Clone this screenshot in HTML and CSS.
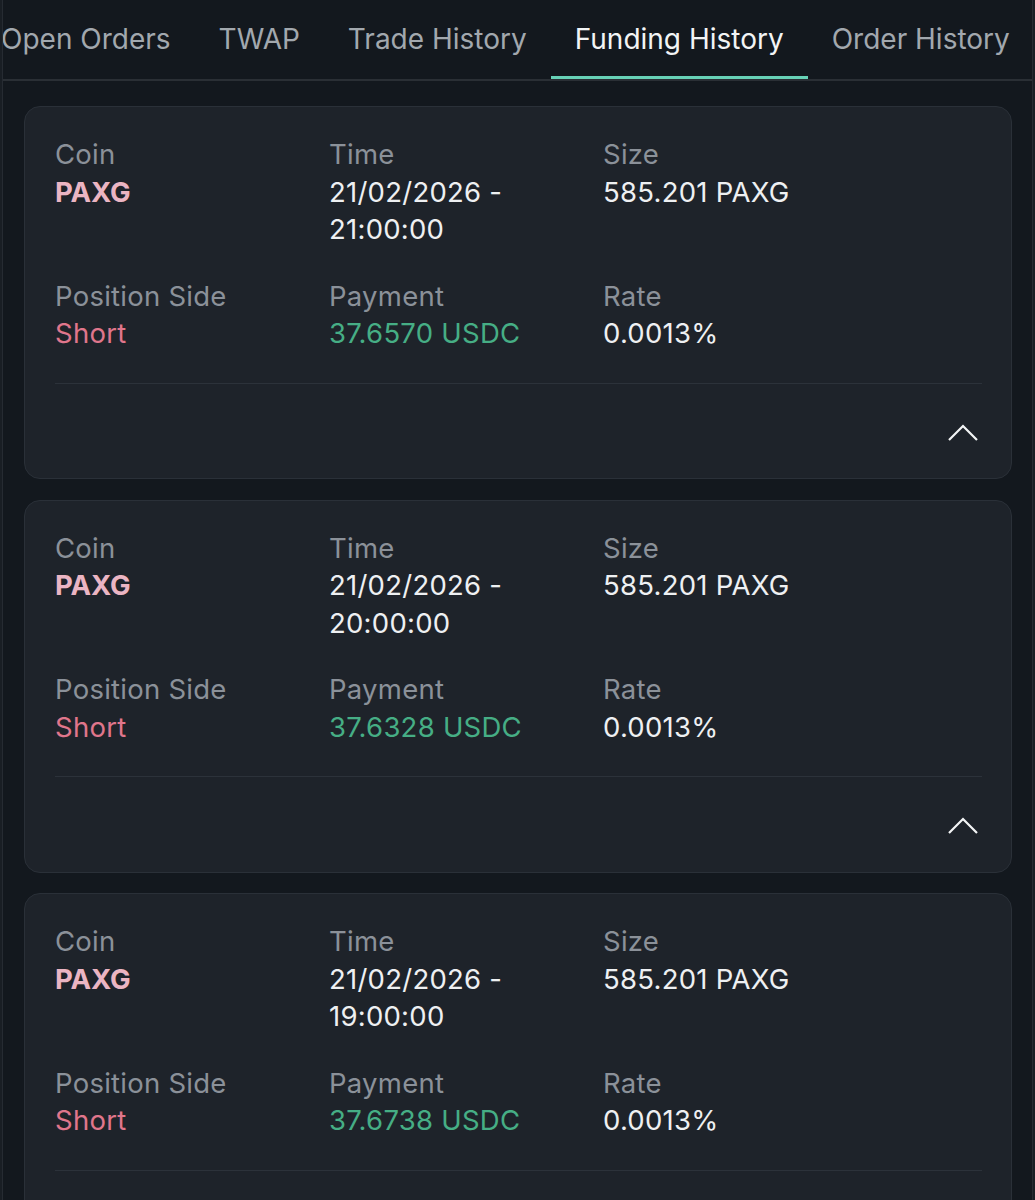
FILE: index.html
```html
<!DOCTYPE html>
<html lang="en">
<head>
<meta charset="utf-8">
<meta name="viewport" content="width=device-width, initial-scale=1">
<title>Funding History</title>
<link rel="stylesheet" href="styles.css">
</head>
<body>
<div class="panel">
	<div class="tabs">
		<div class="tab">Open Orders</div>
		<div class="tab">TWAP</div>
		<div class="tab">Trade History</div>
		<div class="tab active">Funding History</div>
		<div class="tab">Order History</div>
	</div>
	<div class="cards">
		<div class="card">
			<div class="grid">
				<div class="field"><div class="label">Coin</div><div class="value coin">PAXG</div></div>
				<div class="field"><div class="label">Time</div><div class="value">21/02/2026 -<br>21:00:00</div></div>
				<div class="field"><div class="label">Size</div><div class="value">585.201 PAXG</div></div>
				<div class="field"><div class="label">Position Side</div><div class="value short">Short</div></div>
				<div class="field"><div class="label">Payment</div><div class="value pay">37.6570 USDC</div></div>
				<div class="field"><div class="label">Rate</div><div class="value">0.0013%</div></div>
			</div>
			<div class="card-foot">
				<svg class="chevron" width="32" height="20" viewBox="0 0 32 20"><path d="M2 18 L16 4 L30 18" fill="none" stroke="#f2f4f5" stroke-width="2.2"/></svg>
			</div>
		</div>
		<div class="card">
			<div class="grid">
				<div class="field"><div class="label">Coin</div><div class="value coin">PAXG</div></div>
				<div class="field"><div class="label">Time</div><div class="value">21/02/2026 -<br>20:00:00</div></div>
				<div class="field"><div class="label">Size</div><div class="value">585.201 PAXG</div></div>
				<div class="field"><div class="label">Position Side</div><div class="value short">Short</div></div>
				<div class="field"><div class="label">Payment</div><div class="value pay">37.6328 USDC</div></div>
				<div class="field"><div class="label">Rate</div><div class="value">0.0013%</div></div>
			</div>
			<div class="card-foot">
				<svg class="chevron" width="32" height="20" viewBox="0 0 32 20"><path d="M2 18 L16 4 L30 18" fill="none" stroke="#f2f4f5" stroke-width="2.2"/></svg>
			</div>
		</div>
		<div class="card">
			<div class="grid">
				<div class="field"><div class="label">Coin</div><div class="value coin">PAXG</div></div>
				<div class="field"><div class="label">Time</div><div class="value">21/02/2026 -<br>19:00:00</div></div>
				<div class="field"><div class="label">Size</div><div class="value">585.201 PAXG</div></div>
				<div class="field"><div class="label">Position Side</div><div class="value short">Short</div></div>
				<div class="field"><div class="label">Payment</div><div class="value pay">37.6738 USDC</div></div>
				<div class="field"><div class="label">Rate</div><div class="value">0.0013%</div></div>
			</div>
			<div class="card-foot">
				<svg class="chevron" width="32" height="20" viewBox="0 0 32 20"><path d="M2 18 L16 4 L30 18" fill="none" stroke="#f2f4f5" stroke-width="2.2"/></svg>
			</div>
		</div>
	</div>
</div>
</body>
</html>
```

FILE: styles.css
```css
html, body {
	margin: 0;
	padding: 0;
	background: #191e24;
}
body {
	font-family: Inter, "Noto Sans", sans-serif;
	color: #eef0f2;
}
.panel {
	margin-left: 2px;
	width: 1029px;
	border-left: 1px solid #262b32;
	border-right: 1px solid #262b32;
	background: #13181e;
	overflow: hidden;
	min-height: 1300px;
}
.tabs {
	display: flex;
	margin-left: -26px;
	border-bottom: 2px solid #2a2f35;
	white-space: nowrap;
}
.tab {
	padding: 0 24px;
	height: 79px;
	line-height: 79px;
	font-size: 28px;
	color: #a2a8ae;
	flex: none;
}
.tab.active {
	color: #f2f4f5;
	box-shadow: inset 0 -3px 0 #67d2b7;
}
.cards {
	padding: 25px 20px 0 21px;
	display: flex;
	flex-direction: column;
	gap: 20.5px;
}
.card {
	background: #1e232a;
	border: 1px solid #2a3038;
	border-radius: 16px;
	padding: 29px 29px 0 30px;
}
.grid {
	display: grid;
	grid-template-columns: 274px 274px 1fr;
	row-gap: 29px;
	padding-bottom: 30px;
	border-bottom: 1px solid #2c323a;
}
.label, .value {
	font-size: 27.5px;
	line-height: 37.5px;
	letter-spacing: 0.25px;
}
.label { color: #8b9199; }
.value { color: #eef0f2; }
.coin {
	color: #ebb5c3;
	font-weight: 700;
	letter-spacing: 0;
}
.short { color: #e0768c; }
.pay { color: #46ae85; }
.card-foot {
	display: flex;
	justify-content: flex-end;
	padding: 38px 3px 36.5px 0;
}
.chevron { display: block; }
```
